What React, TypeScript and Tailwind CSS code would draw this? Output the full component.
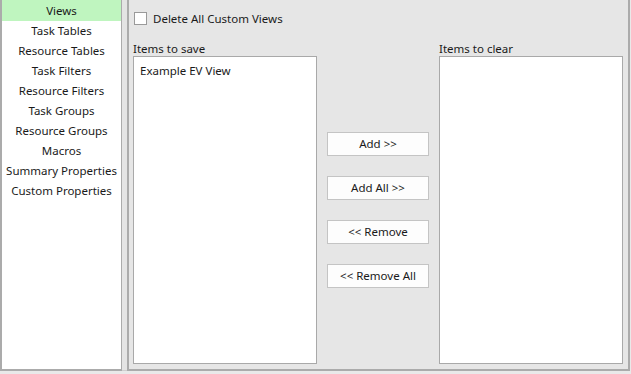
import React from "react";

const NAV_ITEMS = [
  "Views",
  "Task Tables",
  "Resource Tables",
  "Task Filters",
  "Resource Filters",
  "Task Groups",
  "Resource Groups",
  "Macros",
  "Summary Properties",
  "Custom Properties",
];

const ACTIONS = ["Add >>", "Add All >>", "<< Remove", "<< Remove All"];

const App: React.FC = () => {
  return (
    <div
      className="flex h-[374px] w-[631px] flex-col bg-[#e9e9e9] text-[11.5px] text-[#1a1a1a]"
      style={{ fontFamily: '"Noto Sans", "Open Sans", sans-serif' }}
    >
      <div className="flex h-[371px]">
        {/* Left list */}
        <div className="flex w-[122px] flex-col border-b-2 border-l-2 border-r border-[#ababab] bg-white">
          {NAV_ITEMS.map((item, i) => (
            <div
              key={item}
              className={
                i === 0
                  ? "flex h-[21px] items-center justify-center bg-[#bff5bf] pt-px leading-none"
                  : "flex h-[20px] items-center justify-center leading-none"
              }
            >
              {item}
            </div>
          ))}
        </div>

        {/* Splitter */}
        <div className="w-[5px] border-b border-[#cfcfcf] bg-[#e4e4e4]" />

        {/* Main panel */}
        <div className="flex w-[503px] flex-col border-x-2 border-b-2 border-[#ababab] bg-[#e6e6e6] pb-[5px] pl-[4px] pr-[3px] pt-[12px]">
          <label className="ml-[1px] flex items-center gap-[6px]">
            <span className="h-[13px] w-[13px] border border-[#9a9a9a] bg-white" />
            <span className="leading-none">Delete All Custom Views</span>
          </label>

          <div className="mt-[17px] flex flex-1">
            {/* Items to save */}
            <div className="flex w-[184px] flex-col">
              <div className="h-[14px] leading-[14px]">Items to save</div>
              <div className="flex-1 border border-[#a9a9a9] bg-white px-[6px] pt-[5px]">
                Example EV View
              </div>
            </div>

            {/* Buttons */}
            <div className="flex w-[122px] flex-col items-center justify-center gap-[20px] pt-[13px]">
              {ACTIONS.map((a) => (
                <button
                  key={a}
                  className="h-[24px] w-[102px] border border-[#c4c4c4] bg-[#fdfdfd] text-center leading-none"
                >
                  {a}
                </button>
              ))}
            </div>

            {/* Items to clear */}
            <div className="flex w-[184px] flex-col">
              <div className="h-[14px] leading-[14px]">Items to clear</div>
              <div className="flex-1 border border-[#a9a9a9] bg-white" />
            </div>
          </div>
        </div>
      </div>
    </div>
  );
};

export default App;
